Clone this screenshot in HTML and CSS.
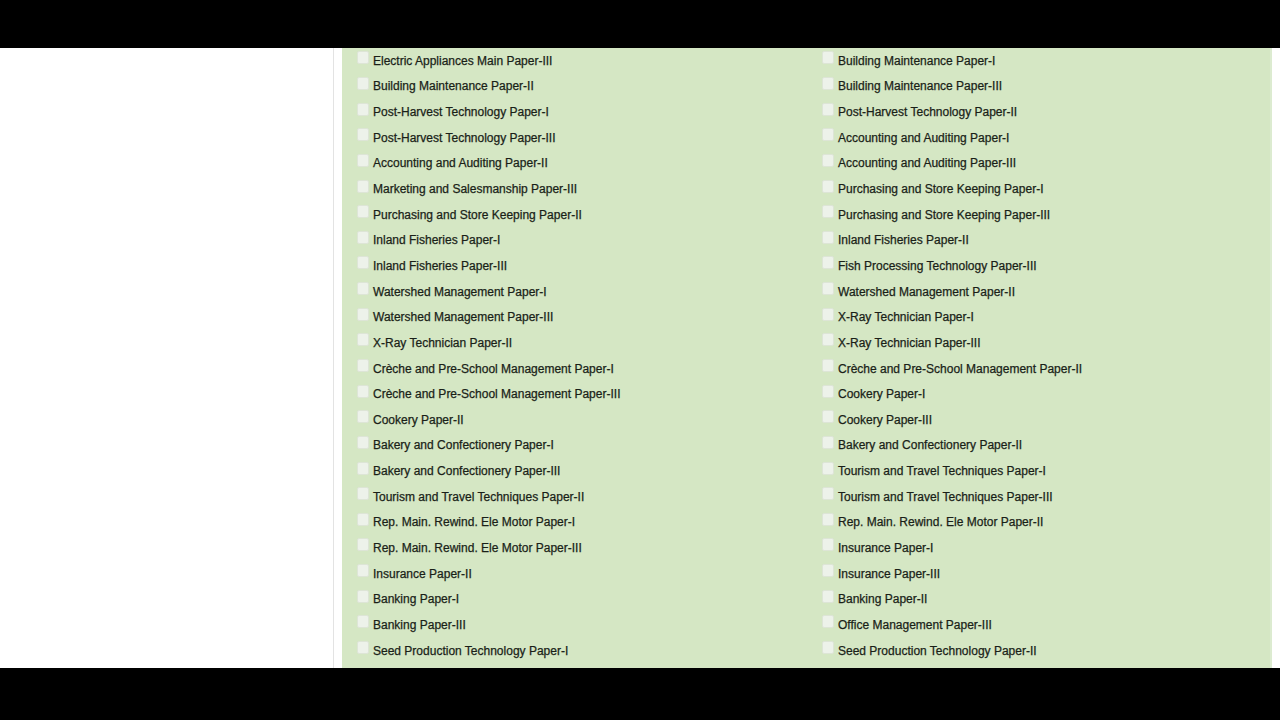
FILE: index.html
```html
<!DOCTYPE html>
<html lang="en">

<head>
  <meta charset="UTF-8">
  <title>Subject Selection</title>
  <meta name="viewport" content="width=device-width,initial-scale=1.0">
  <link rel="stylesheet" href="styles.css">
</head>

<body>
  <div class="topbar"></div>

  <div class="page">
    <aside class="sidebar"></aside>

    <main class="content">
      <div class="subjects">
        <label class="subject"><input type="checkbox"> Electric Appliances Main Paper-III</label>
        <label class="subject"><input type="checkbox"> Building Maintenance Paper-I</label>
        <label class="subject"><input type="checkbox"> Building Maintenance Paper-II</label>
        <label class="subject"><input type="checkbox"> Building Maintenance Paper-III</label>
        <label class="subject"><input type="checkbox"> Post-Harvest Technology Paper-I</label>
        <label class="subject"><input type="checkbox"> Post-Harvest Technology Paper-II</label>
        <label class="subject"><input type="checkbox"> Post-Harvest Technology Paper-III</label>
        <label class="subject"><input type="checkbox"> Accounting and Auditing Paper-I</label>
        <label class="subject"><input type="checkbox"> Accounting and Auditing Paper-II</label>
        <label class="subject"><input type="checkbox"> Accounting and Auditing Paper-III</label>
        <label class="subject"><input type="checkbox"> Marketing and Salesmanship Paper-III</label>
        <label class="subject"><input type="checkbox"> Purchasing and Store Keeping Paper-I</label>
        <label class="subject"><input type="checkbox"> Purchasing and Store Keeping Paper-II</label>
        <label class="subject"><input type="checkbox"> Purchasing and Store Keeping Paper-III</label>
        <label class="subject"><input type="checkbox"> Inland Fisheries Paper-I</label>
        <label class="subject"><input type="checkbox"> Inland Fisheries Paper-II</label>
        <label class="subject"><input type="checkbox"> Inland Fisheries Paper-III</label>
        <label class="subject"><input type="checkbox"> Fish Processing Technology Paper-III</label>
        <label class="subject"><input type="checkbox"> Watershed Management Paper-I</label>
        <label class="subject"><input type="checkbox"> Watershed Management Paper-II</label>
        <label class="subject"><input type="checkbox"> Watershed Management Paper-III</label>
        <label class="subject"><input type="checkbox"> X-Ray Technician Paper-I</label>
        <label class="subject"><input type="checkbox"> X-Ray Technician Paper-II</label>
        <label class="subject"><input type="checkbox"> X-Ray Technician Paper-III</label>
        <label class="subject"><input type="checkbox"> Crèche and Pre-School Management Paper-I</label>
        <label class="subject"><input type="checkbox"> Crèche and Pre-School Management Paper-II</label>
        <label class="subject"><input type="checkbox"> Crèche and Pre-School Management Paper-III</label>
        <label class="subject"><input type="checkbox"> Cookery Paper-I</label>
        <label class="subject"><input type="checkbox"> Cookery Paper-II</label>
        <label class="subject"><input type="checkbox"> Cookery Paper-III</label>
        <label class="subject"><input type="checkbox"> Bakery and Confectionery Paper-I</label>
        <label class="subject"><input type="checkbox"> Bakery and Confectionery Paper-II</label>
        <label class="subject"><input type="checkbox"> Bakery and Confectionery Paper-III</label>
        <label class="subject"><input type="checkbox"> Tourism and Travel Techniques Paper-I</label>
        <label class="subject"><input type="checkbox"> Tourism and Travel Techniques Paper-II</label>
        <label class="subject"><input type="checkbox"> Tourism and Travel Techniques Paper-III</label>
        <label class="subject"><input type="checkbox"> Rep. Main. Rewind. Ele Motor Paper-I</label>
        <label class="subject"><input type="checkbox"> Rep. Main. Rewind. Ele Motor Paper-II</label>
        <label class="subject"><input type="checkbox"> Rep. Main. Rewind. Ele Motor Paper-III</label>
        <label class="subject"><input type="checkbox"> Insurance Paper-I</label>
        <label class="subject"><input type="checkbox"> Insurance Paper-II</label>
        <label class="subject"><input type="checkbox"> Insurance Paper-III</label>
        <label class="subject"><input type="checkbox"> Banking Paper-I</label>
        <label class="subject"><input type="checkbox"> Banking Paper-II</label>
        <label class="subject"><input type="checkbox"> Banking Paper-III</label>
        <label class="subject"><input type="checkbox"> Office Management Paper-III</label>
        <label class="subject"><input type="checkbox"> Seed Production Technology Paper-I</label>
        <label class="subject"><input type="checkbox"> Seed Production Technology Paper-II</label>
      </div>
    </main>

    <div class="edge"></div>
  </div>

  <div class="bottombar"></div>
</body>

</html>
```

FILE: styles.css
```css
html,
body {
  margin: 0;
  width: 100%;
  height: 100%;
  background-color: #000;
  overflow: hidden;
}

.topbar {
  height: 48px;
  background-color: #000;
}

.page {
  display: flex;
  height: 620px;
  background-color: #fff;
  overflow: hidden;
}

.sidebar {
  width: 333px;
  border-right: 1px solid #e3e3e3;
  background-color: #fff;
}

.content {
  flex: 1;
  margin-left: 8px;
  background-color: #d5e7c4;
  border-right: 2px solid #dcebd0;
  overflow: hidden;
}

.edge {
  width: 8px;
  background-color: #fff;
}

.subjects {
  display: grid;
  grid-template-columns: 465px 1fr;
  grid-auto-rows: 25.65px;
  padding-left: 15px;
}

.subject {
  display: flex;
  align-items: center;
  font-family: "Liberation Sans", Arial, sans-serif;
  font-size: 12px;
  color: #1a1f18;
  -webkit-text-stroke: 0.25px #1a1f18;
}

.subject input {
  appearance: none;
  width: 12px;
  height: 13px;
  margin: -6px 4px 0 0;
  border: 1px solid #dde5d6;
  border-radius: 2px;
  background-color: #edf2ea;
}

.bottombar {
  height: 52px;
  background-color: #000;
}
```
